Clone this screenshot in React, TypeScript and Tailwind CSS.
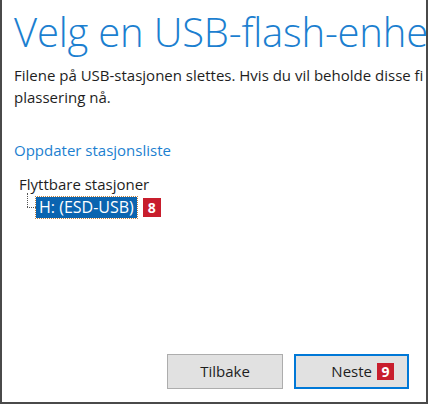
export default function App() {
    return (
        <div className="w-[428px] h-[404px] bg-white overflow-hidden relative font-['Open_Sans',sans-serif]">
            <div className="absolute inset-0 border-l-2 border-r-2 border-b-2 border-[#4a4a4a] pointer-events-none z-10" />
            <div className="h-full flex flex-col pl-[14px] whitespace-nowrap">
                {/* Title */}
                <h1 className="mt-[6px] text-[40px] leading-[52px] font-light text-[#1c7fd0] tracking-[-0.2px]">
                    Velg en USB-flash-enhe
                </h1>
                <p className="mt-[6px] text-[15px] leading-[22px] text-[#1e1e1e]">
                    Filene på USB-stasjonen slettes. Hvis du vil beholde disse fi
                    <br />
                    plassering nå.
                </p>

                <p className="mt-[32px] text-[15px] leading-[20px] text-[#1c7fd0]">
                    Oppdater stasjonsliste
                </p>

                {/* Tree */}
                <div className="mt-[14px] pl-[5px] text-[15px] leading-[20px] text-[#1e1e1e]">
                    <p>Flyttbare stasjoner</p>
                    <div className="flex items-center mt-[3px]">
                        <div className="w-[17px] h-[22px] flex flex-col -mt-[8px]">
                            <div className="ml-[8px] flex-1 border-l border-dotted border-[#555]" />
                            <div className="h-[8px] ml-[8px] border-t border-dotted border-[#555]" />
                        </div>
                        <span className="bg-[#0a64b0] text-white text-[16px] px-[3px] h-[21px] leading-[21px] outline-1 outline-dotted outline-[#c08040]">
                            H: (ESD-USB)
                        </span>
                        <span className="ml-[6px] w-[18px] h-[19px] bg-[#c81e2d] text-white font-bold text-[14px] leading-[19px] text-center">
                            8
                        </span>
                    </div>
                </div>

                {/* Buttons */}
                <div className="mt-auto mb-[15px] flex gap-[11px] pl-[153px]">
                    <button className="w-[116px] h-[35px] bg-[#e1e1e1] border border-[#adadad] text-[15px] text-[#1e1e1e]">
                        Tilbake
                    </button>
                    <button className="w-[115px] h-[35px] bg-[#e1e1e1] border-2 border-[#0078d7] text-[15px] text-[#1e1e1e] flex items-center justify-end pr-[13px] gap-[5px]">
                        <span>Neste</span>
                        <span className="w-[17px] h-[17px] bg-[#c81e2d] text-white font-bold text-[14px] leading-[17px] text-center">
                            9
                        </span>
                    </button>
                </div>
            </div>
        </div>
    );
}
